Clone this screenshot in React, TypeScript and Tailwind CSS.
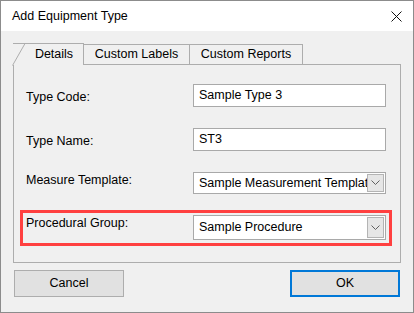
import React from "react";

const font = { fontFamily: '"Liberation Sans", Arial, sans-serif' };

const Chevron = () => (
  <svg width="9" height="6" viewBox="0 0 9 6" fill="none">
    <path d="M0.5 0.5 L4.5 4.5 L8.5 0.5" stroke="#606060" strokeWidth="1" />
  </svg>
);

const TextBox = ({ value }: { value: string }) => (
  <div className="w-[193px] h-[23px] bg-white border border-[#a9a9a9] flex items-center pl-[5px] text-[12.5px] text-black">
    {value}
  </div>
);

const Combo = ({ value, tall }: { value: string; tall?: boolean }) => (
  <div
    className={`w-[193px] ${tall ? "h-[25px]" : "h-[22px]"} bg-white border border-[#a9a9a9] flex items-center pl-[5px] pr-[1px] text-[12.5px] text-black`}
  >
    <span className="flex-1 overflow-hidden whitespace-nowrap">{value}</span>
    <div className="w-[17px] self-stretch my-[1px] bg-[#e6e6e6] border border-[#b4b4b4] flex items-center justify-center">
      <Chevron />
    </div>
  </div>
);

export default function App() {
  return (
    <div className="w-[414px] h-[313px] border border-[#8c8c8c] bg-[#f0f0f0] flex flex-col" style={font}>
      {/* Title bar */}
      <div className="h-[30px] bg-white flex items-center justify-between pl-[11px] pr-[11px]">
        <span className="text-[12.5px] text-black">Add Equipment Type</span>
        <svg width="11" height="11" viewBox="0 0 11 11">
          <path d="M0.5 0.5 L10.5 10.5 M10.5 0.5 L0.5 10.5" stroke="#111" strokeWidth="1" />
        </svg>
      </div>

      {/* Tabs */}
      <div className="pt-[12px] pl-[12px] flex items-end h-[33px] relative z-10">
        <div className="relative w-[71px] h-[22px] border-t border-r border-[#adadad] bg-[#f0f0f0] -mb-[1px] flex items-center justify-center pl-[12px] text-[12.5px] text-black">
          <svg className="absolute -left-[1px] top-[-1px]" width="16" height="23" viewBox="0 0 16 23">
            <path d="M15.5 0.5 L13 0.5 L0.5 22.5" stroke="#adadad" fill="none" strokeWidth="1" />
          </svg>
          Details
        </div>
        <div className="w-[106px] h-[20px] border-t border-r border-[#adadad] bg-[#f0f0f0] flex items-center justify-center text-[12.5px] text-black">
          Custom Labels
        </div>
        <div className="w-[113px] h-[20px] border-t border-r border-[#adadad] bg-[#f0f0f0] flex items-center justify-center text-[12.5px] text-black">
          Custom Reports
        </div>
      </div>

      {/* Panel */}
      <div className="ml-[12px] w-[388px] h-[199px] border border-[#adadad] pt-[19px] flex flex-col text-[12.5px] text-black">
        <div className="flex items-start pl-[12px] pr-[13px]">
          <span className="w-[167px] mt-[4px]">Type Code:</span>
          <TextBox value="Sample Type 3" />
        </div>
        <div className="flex items-start pl-[12px] pr-[13px] mt-[21px]">
          <span className="w-[167px] mt-[4px]">Type Name:</span>
          <TextBox value="ST3" />
        </div>
        <div className="flex items-start pl-[12px] pr-[13px] mt-[21px]">
          <span className="w-[167px] -mt-[1px]">Measure Template:</span>
          <Combo value="Sample Measurement Template" />
        </div>
        <div className="ml-[6px] w-[372px] h-[36px] mt-[16px] border-[3px] border-[#ff4040] flex items-start pt-[2px] pl-[3px]">
          <span className="w-[167px] -mt-[1px]">Procedural Group:</span>
          <Combo value="Sample Procedure" tall />
        </div>
      </div>

      {/* Buttons */}
      <div className="flex justify-between pl-[13px] pr-[13px] mt-[7px]">
        <button className="w-[110px] h-[27px] bg-[#e1e1e1] border border-[#adadad] text-[12.5px] text-black">
          Cancel
        </button>
        <button className="w-[110px] h-[27px] bg-[#e1e1e1] border-2 border-[#0078d7] text-[12.5px] text-black">
          OK
        </button>
      </div>
    </div>
  );
}
